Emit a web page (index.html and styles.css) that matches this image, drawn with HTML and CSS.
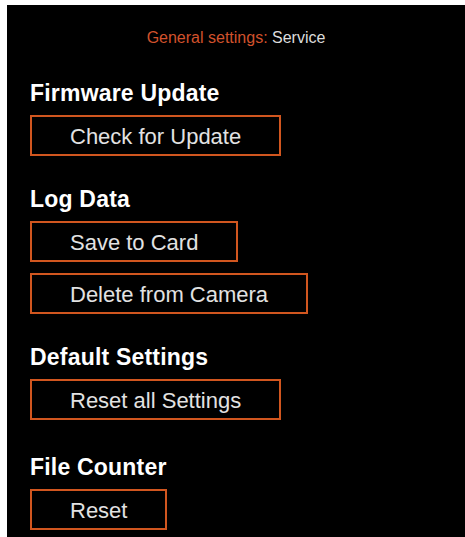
FILE: index.html
```html
<!DOCTYPE html>
<html lang="en">
<head>
  <meta charset="utf-8" />
  <title>General settings: Service</title>
  <meta name="viewport" content="width=device-width, initial-scale=1" />
  <link rel="stylesheet" href="styles.css">
</head>
<body>
  <div class="screen">
    <p class="title"><span class="path">General settings:</span> Service</p>

    <section class="group">
      <h2>Firmware Update</h2>
      <div class="actions">
        <button class="action">Check for Update</button>
      </div>
    </section>

    <section class="group">
      <h2>Log Data</h2>
      <div class="actions">
        <button class="action">Save to Card</button>
        <button class="action">Delete from Camera</button>
      </div>
    </section>

    <section class="group">
      <h2>Default Settings</h2>
      <div class="actions">
        <button class="action">Reset all Settings</button>
      </div>
    </section>

    <section class="group">
      <h2>File Counter</h2>
      <div class="actions">
        <button class="action">Reset</button>
      </div>
    </section>
  </div>
</body>
</html>
```

FILE: styles.css
```css
body {
  margin: 5px 0 0 7px;
  background-color: #fff;
  font-family: "Liberation Sans", Arial, sans-serif;
}

.screen {
  min-height: 532px;
  box-sizing: border-box;
  background-color: #000;
  color: #fff;
  padding: 23px 0 0 23px;
}

.title {
  margin: 0;
  padding-right: 23px;
  text-align: center;
  font-size: 16px;
  line-height: 20px;
  color: #dcdcdc;
}

.title .path {
  color: #d2522c;
}

.group {
  margin-top: 30px;
}

.group:first-of-type {
  margin-top: 32px;
}

.group:last-child {
  margin-top: 34px;
}

h2 {
  margin: 0 0 9px;
  font-size: 23px;
  line-height: 26px;
  font-weight: bold;
  letter-spacing: 0.2px;
}

.actions {
  display: flex;
  flex-direction: column;
  align-items: flex-start;
  gap: 11px;
}

.action {
  background: transparent;
  border: 2px solid #d1561f;
  color: #e2e2e2;
  font-family: inherit;
  font-size: 22px;
  line-height: 34px;
  padding: 3px 38px 0;
  cursor: pointer;
}

.action:hover {
  background-color: #1a0a04;
}
```
